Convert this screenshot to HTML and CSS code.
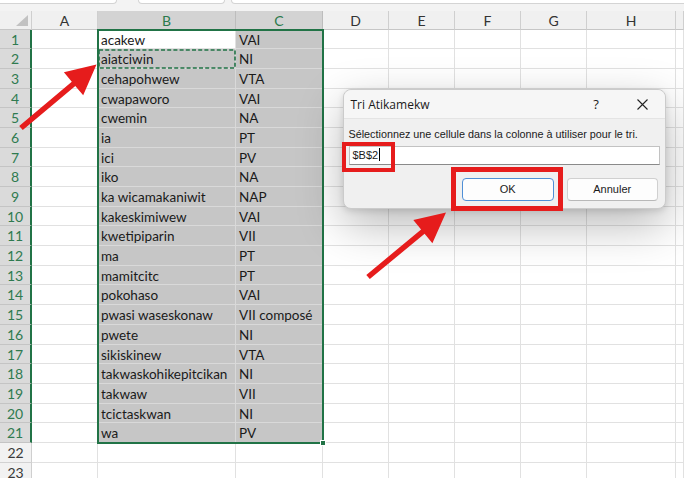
FILE: index.html
```html
<!DOCTYPE html>
<html lang="fr">
<head>
<meta charset="utf-8">
<title>Tri Atikamekw</title>
<link rel="stylesheet" href="styles.css">
</head>
<body>
<div class="topbar">
  <div class="tb tb1"></div>
  <div class="tb tb2"></div>
  <div class="tb tb3"></div>
</div>
<div class="sheet">
  <div class="row head">
    <div class="cell w-h corner"><span class="tri"></span></div>
    <div class="cell w-a ch">A</div>
    <div class="cell w-b ch on">B</div>
    <div class="cell w-c ch on">C</div>
    <div class="cell w-d ch">D</div>
    <div class="cell w-e ch">E</div>
    <div class="cell w-f ch">F</div>
    <div class="cell w-g ch">G</div>
    <div class="cell w-H ch">H</div>
    <div class="cell w-i ch"></div>
  </div>
  <div class="row"><div class="cell w-h rh on">1</div><div class="cell w-a"></div><div class="cell w-b">acakew</div><div class="cell w-c s">VAI</div><div class="cell w-d"></div><div class="cell w-e"></div><div class="cell w-f"></div><div class="cell w-g"></div><div class="cell w-H"></div><div class="cell w-i"></div></div>
  <div class="row"><div class="cell w-h rh on">2</div><div class="cell w-a"></div><div class="cell w-b s">aiatciwin</div><div class="cell w-c s">NI</div><div class="cell w-d"></div><div class="cell w-e"></div><div class="cell w-f"></div><div class="cell w-g"></div><div class="cell w-H"></div><div class="cell w-i"></div></div>
  <div class="row"><div class="cell w-h rh on">3</div><div class="cell w-a"></div><div class="cell w-b s">cehapohwew</div><div class="cell w-c s">VTA</div><div class="cell w-d"></div><div class="cell w-e"></div><div class="cell w-f"></div><div class="cell w-g"></div><div class="cell w-H"></div><div class="cell w-i"></div></div>
  <div class="row"><div class="cell w-h rh on">4</div><div class="cell w-a"></div><div class="cell w-b s">cwapaworo</div><div class="cell w-c s">VAI</div><div class="cell w-d"></div><div class="cell w-e"></div><div class="cell w-f"></div><div class="cell w-g"></div><div class="cell w-H"></div><div class="cell w-i"></div></div>
  <div class="row"><div class="cell w-h rh on">5</div><div class="cell w-a"></div><div class="cell w-b s">cwemin</div><div class="cell w-c s">NA</div><div class="cell w-d"></div><div class="cell w-e"></div><div class="cell w-f"></div><div class="cell w-g"></div><div class="cell w-H"></div><div class="cell w-i"></div></div>
  <div class="row"><div class="cell w-h rh on">6</div><div class="cell w-a"></div><div class="cell w-b s">ia</div><div class="cell w-c s">PT</div><div class="cell w-d"></div><div class="cell w-e"></div><div class="cell w-f"></div><div class="cell w-g"></div><div class="cell w-H"></div><div class="cell w-i"></div></div>
  <div class="row"><div class="cell w-h rh on">7</div><div class="cell w-a"></div><div class="cell w-b s">ici</div><div class="cell w-c s">PV</div><div class="cell w-d"></div><div class="cell w-e"></div><div class="cell w-f"></div><div class="cell w-g"></div><div class="cell w-H"></div><div class="cell w-i"></div></div>
  <div class="row"><div class="cell w-h rh on">8</div><div class="cell w-a"></div><div class="cell w-b s">iko</div><div class="cell w-c s">NA</div><div class="cell w-d"></div><div class="cell w-e"></div><div class="cell w-f"></div><div class="cell w-g"></div><div class="cell w-H"></div><div class="cell w-i"></div></div>
  <div class="row"><div class="cell w-h rh on">9</div><div class="cell w-a"></div><div class="cell w-b s">ka wicamakaniwit</div><div class="cell w-c s">NAP</div><div class="cell w-d"></div><div class="cell w-e"></div><div class="cell w-f"></div><div class="cell w-g"></div><div class="cell w-H"></div><div class="cell w-i"></div></div>
  <div class="row"><div class="cell w-h rh on">10</div><div class="cell w-a"></div><div class="cell w-b s">kakeskimiwew</div><div class="cell w-c s">VAI</div><div class="cell w-d"></div><div class="cell w-e"></div><div class="cell w-f"></div><div class="cell w-g"></div><div class="cell w-H"></div><div class="cell w-i"></div></div>
  <div class="row"><div class="cell w-h rh on">11</div><div class="cell w-a"></div><div class="cell w-b s">kwetipiparin</div><div class="cell w-c s">VII</div><div class="cell w-d"></div><div class="cell w-e"></div><div class="cell w-f"></div><div class="cell w-g"></div><div class="cell w-H"></div><div class="cell w-i"></div></div>
  <div class="row"><div class="cell w-h rh on">12</div><div class="cell w-a"></div><div class="cell w-b s">ma</div><div class="cell w-c s">PT</div><div class="cell w-d"></div><div class="cell w-e"></div><div class="cell w-f"></div><div class="cell w-g"></div><div class="cell w-H"></div><div class="cell w-i"></div></div>
  <div class="row"><div class="cell w-h rh on">13</div><div class="cell w-a"></div><div class="cell w-b s">mamitcitc</div><div class="cell w-c s">PT</div><div class="cell w-d"></div><div class="cell w-e"></div><div class="cell w-f"></div><div class="cell w-g"></div><div class="cell w-H"></div><div class="cell w-i"></div></div>
  <div class="row"><div class="cell w-h rh on">14</div><div class="cell w-a"></div><div class="cell w-b s">pokohaso</div><div class="cell w-c s">VAI</div><div class="cell w-d"></div><div class="cell w-e"></div><div class="cell w-f"></div><div class="cell w-g"></div><div class="cell w-H"></div><div class="cell w-i"></div></div>
  <div class="row"><div class="cell w-h rh on">15</div><div class="cell w-a"></div><div class="cell w-b s">pwasi waseskonaw</div><div class="cell w-c s">VII composé</div><div class="cell w-d"></div><div class="cell w-e"></div><div class="cell w-f"></div><div class="cell w-g"></div><div class="cell w-H"></div><div class="cell w-i"></div></div>
  <div class="row"><div class="cell w-h rh on">16</div><div class="cell w-a"></div><div class="cell w-b s">pwete</div><div class="cell w-c s">NI</div><div class="cell w-d"></div><div class="cell w-e"></div><div class="cell w-f"></div><div class="cell w-g"></div><div class="cell w-H"></div><div class="cell w-i"></div></div>
  <div class="row"><div class="cell w-h rh on">17</div><div class="cell w-a"></div><div class="cell w-b s">sikiskinew</div><div class="cell w-c s">VTA</div><div class="cell w-d"></div><div class="cell w-e"></div><div class="cell w-f"></div><div class="cell w-g"></div><div class="cell w-H"></div><div class="cell w-i"></div></div>
  <div class="row"><div class="cell w-h rh on">18</div><div class="cell w-a"></div><div class="cell w-b s">takwaskohikepitcikan</div><div class="cell w-c s">NI</div><div class="cell w-d"></div><div class="cell w-e"></div><div class="cell w-f"></div><div class="cell w-g"></div><div class="cell w-H"></div><div class="cell w-i"></div></div>
  <div class="row"><div class="cell w-h rh on">19</div><div class="cell w-a"></div><div class="cell w-b s">takwaw</div><div class="cell w-c s">VII</div><div class="cell w-d"></div><div class="cell w-e"></div><div class="cell w-f"></div><div class="cell w-g"></div><div class="cell w-H"></div><div class="cell w-i"></div></div>
  <div class="row"><div class="cell w-h rh on">20</div><div class="cell w-a"></div><div class="cell w-b s">tcictaskwan</div><div class="cell w-c s">NI</div><div class="cell w-d"></div><div class="cell w-e"></div><div class="cell w-f"></div><div class="cell w-g"></div><div class="cell w-H"></div><div class="cell w-i"></div></div>
  <div class="row"><div class="cell w-h rh on">21</div><div class="cell w-a"></div><div class="cell w-b s">wa</div><div class="cell w-c s">PV</div><div class="cell w-d"></div><div class="cell w-e"></div><div class="cell w-f"></div><div class="cell w-g"></div><div class="cell w-H"></div><div class="cell w-i"></div></div>
  <div class="row"><div class="cell w-h rh">22</div><div class="cell w-a"></div><div class="cell w-b"></div><div class="cell w-c"></div><div class="cell w-d"></div><div class="cell w-e"></div><div class="cell w-f"></div><div class="cell w-g"></div><div class="cell w-H"></div><div class="cell w-i"></div></div>
  <div class="row"><div class="cell w-h rh">23</div><div class="cell w-a"></div><div class="cell w-b"></div><div class="cell w-c"></div><div class="cell w-d"></div><div class="cell w-e"></div><div class="cell w-f"></div><div class="cell w-g"></div><div class="cell w-H"></div><div class="cell w-i"></div></div>
</div>

<div class="selbox"><span class="handle"></span></div>
<div class="copybox">
  <svg width="138" height="20" viewBox="0 0 138 20"><rect x="1" y="1" width="136" height="18" fill="none" stroke="#217346" stroke-width="1.6" stroke-dasharray="4 2.2"/></svg>
</div>

<div class="dlg">
  <div class="dlg-title">
    <span class="dlg-name">Tri Atikamekw</span>
    <span class="dlg-btn">?</span>
    <span class="dlg-btn"><svg width="11" height="11" viewBox="0 0 11 11"><path d="M0.5 0.5 L10.5 10.5 M10.5 0.5 L0.5 10.5" stroke="#222" stroke-width="1.1" fill="none"/></svg></span>
  </div>
  <div class="dlg-body">
    <div class="dlg-label">Sélectionnez une cellule dans la colonne à utiliser pour le tri.</div>
    <div class="dlg-input">$B$2<span class="caret"></span></div>
    <div class="dlg-actions">
      <div class="btn primary">OK</div>
      <div class="btn">Annuler</div>
    </div>
  </div>
</div>

<div class="mark mark-input"></div>
<div class="mark mark-ok"></div>

<svg class="arrows" width="684" height="478" viewBox="0 0 684 478">
  <polygon fill="#e61c1c" points="19.2,125.9 71.8,81.7 63.9,72.3 96.5,64.5 83.2,95.3 75.3,85.9 22.8,130.1"/>
  <polygon fill="#e61c1c" points="366.3,274.9 421.1,229.5 413.3,220.1 446,212.5 432.4,243.2 424.6,233.7 369.8,279.1"/>
</svg>
</body>
</html>
```

FILE: styles.css
```css
* { box-sizing: border-box; margin: 0; padding: 0; }
html, body { width: 684px; height: 478px; overflow: hidden; }
body {
  position: relative;
  background: #ffffff;
  font-family: Lato, "Liberation Sans", sans-serif;
  color: #1a1a1a;
}

/* top strip (name box / formula bar bottoms) */
.topbar {
  height: 10.5px;
  background: #f3f3f3;
  display: flex;
  align-items: flex-start;
}
.tb {
  height: 4px;
  background: #ffffff;
  border: 1px solid #d4d4d4;
  border-top: 0;
  border-radius: 0 0 5px 5px;
}
.tb1 { margin-left: -6px; width: 123px; }
.tb2 { margin-left: 21px; width: 87px; }
.tb3 { margin-left: 6px; flex: 1; margin-right: -8px; }

/* sheet grid */
.sheet { display: flex; flex-direction: column; }
.row { display: flex; height: 19.7px; }
.row.head { height: 19px; }
.cell {
  flex: none;
  height: 100%;
  border-right: 1px solid #e1e1e1;
  border-bottom: 1px solid #e1e1e1;
  font-size: 13.5px;
  line-height: 20px;
  padding-left: 3px;
  white-space: nowrap;
  overflow: hidden;
}
.w-h { width: 32px; }
.w-a { width: 66px; }
.w-b { width: 138px; }
.w-c { width: 87px; }
.w-d { width: 66px; }
.w-e { width: 66px; }
.w-f { width: 66px; }
.w-g { width: 66px; }
.w-H { width: 89px; }
.w-i { flex: 1; }

.ch {
  background: #f0f0f0;
  border-right-color: #cfcfcf;
  border-bottom-color: #c6c6c6;
  text-align: center;
  padding-left: 0;
  color: #333;
  font-size: 14px;
  line-height: 19px;
}
.ch.on { background: #d3d3d3; color: #2a7a4c; border-right-color: #bdbdbd; }
.corner {
  background: #f0f0f0;
  border-right-color: #cfcfcf;
  border-bottom-color: #c6c6c6;
  display: flex;
  align-items: flex-end;
  justify-content: flex-end;
  padding: 0 3px 3px 0;
}
.tri {
  width: 0; height: 0;
  border-left: 12px solid transparent;
  border-bottom: 11px solid #c2c2c2;
}

.rh {
  background: #f2f2f2;
  border-right-color: #cfcfcf;
  border-bottom-color: #d2d2d2;
  text-align: center;
  padding-left: 0;
  color: #3a3a3a;
  font-size: 14px;
}
.rh.on {
  background: #dadada;
  color: #2f7a50;
  border-right: 2px solid #217346;
  border-bottom-color: #c4c4c4;
}

.s { background: #c6c6c6; border-color: #d9d9d9; }

/* selection overlays */
.selbox {
  position: absolute;
  left: 97px;
  top: 28.5px;
  width: 227px;
  height: 415.7px;
  border: 2px solid #217346;
}
.handle {
  position: absolute;
  right: -4px;
  bottom: -4px;
  width: 6px;
  height: 6px;
  background: #217346;
  border: 1px solid #ffffff;
}
.copybox {
  position: absolute;
  left: 98px;
  top: 49.2px;
  width: 138px;
  height: 20px;
}
.copybox svg { display: block; }

/* dialog */
.dlg {
  position: absolute;
  left: 342.5px;
  top: 89px;
  width: 323.5px;
  height: 119.5px;
  background: #f0f0f0;
  border: 1px solid #cbcbcb;
  border-radius: 8px;
  box-shadow: 0 16px 46px rgba(0, 0, 0, 0.28), 0 2px 6px rgba(0, 0, 0, 0.12);
  font-family: "Liberation Sans", Arial, sans-serif;
  color: #1a1a1a;
}
.dlg-title {
  height: 29px;
  display: flex;
  align-items: center;
  padding-left: 7px;
  background: #f6f6f6;
  border-bottom: 1px solid #e4e4e4;
  border-radius: 8px 8px 0 0;
  font-family: "Open Sans", "Liberation Sans", sans-serif;
  font-size: 12px;
}
.dlg-name { flex: 1; }
.dlg-btn {
  width: 46px;
  height: 29px;
  display: flex;
  align-items: center;
  justify-content: center;
  font-size: 13px;
}
.dlg-body { padding: 0 6px 0 5px; }
.dlg-label {
  margin-top: 8px;
  font-size: 10.8px;
  line-height: 14px;
  white-space: nowrap;
}
.dlg-input {
  margin-top: 5px;
  width: 311px;
  height: 19px;
  background: #ffffff;
  border: 1px solid #c2c2c2;
  border-bottom-color: #8a8a8a;
  font-size: 11px;
  line-height: 17px;
  padding-left: 3px;
}
.caret {
  display: inline-block;
  width: 1px;
  height: 13px;
  background: #000;
  vertical-align: -2px;
  margin-left: 1px;
}
.dlg-actions {
  margin-top: 13px;
  display: flex;
  justify-content: flex-end;
  gap: 13px;
  padding-right: 1px;
}
.btn {
  width: 91.5px;
  height: 23px;
  background: #fdfdfd;
  border: 1px solid #d0d0d0;
  border-bottom-color: #b8b8b8;
  border-radius: 4px;
  font-size: 11px;
  line-height: 21px;
  text-align: center;
}
.btn.primary {
  border: 1.5px solid #4f8fd6;
  line-height: 20px;
}

/* annotations */
.mark {
  position: absolute;
  border: 4.6px solid #e61c1c;
}
.mark-input { left: 341.5px; top: 141.7px; width: 53px; height: 30px; }
.mark-ok { left: 450.7px; top: 167.3px; width: 112px; height: 43.4px; border-width: 5px; }

.arrows {
  position: absolute;
  left: 0;
  top: 0;
  pointer-events: none;
}
```
